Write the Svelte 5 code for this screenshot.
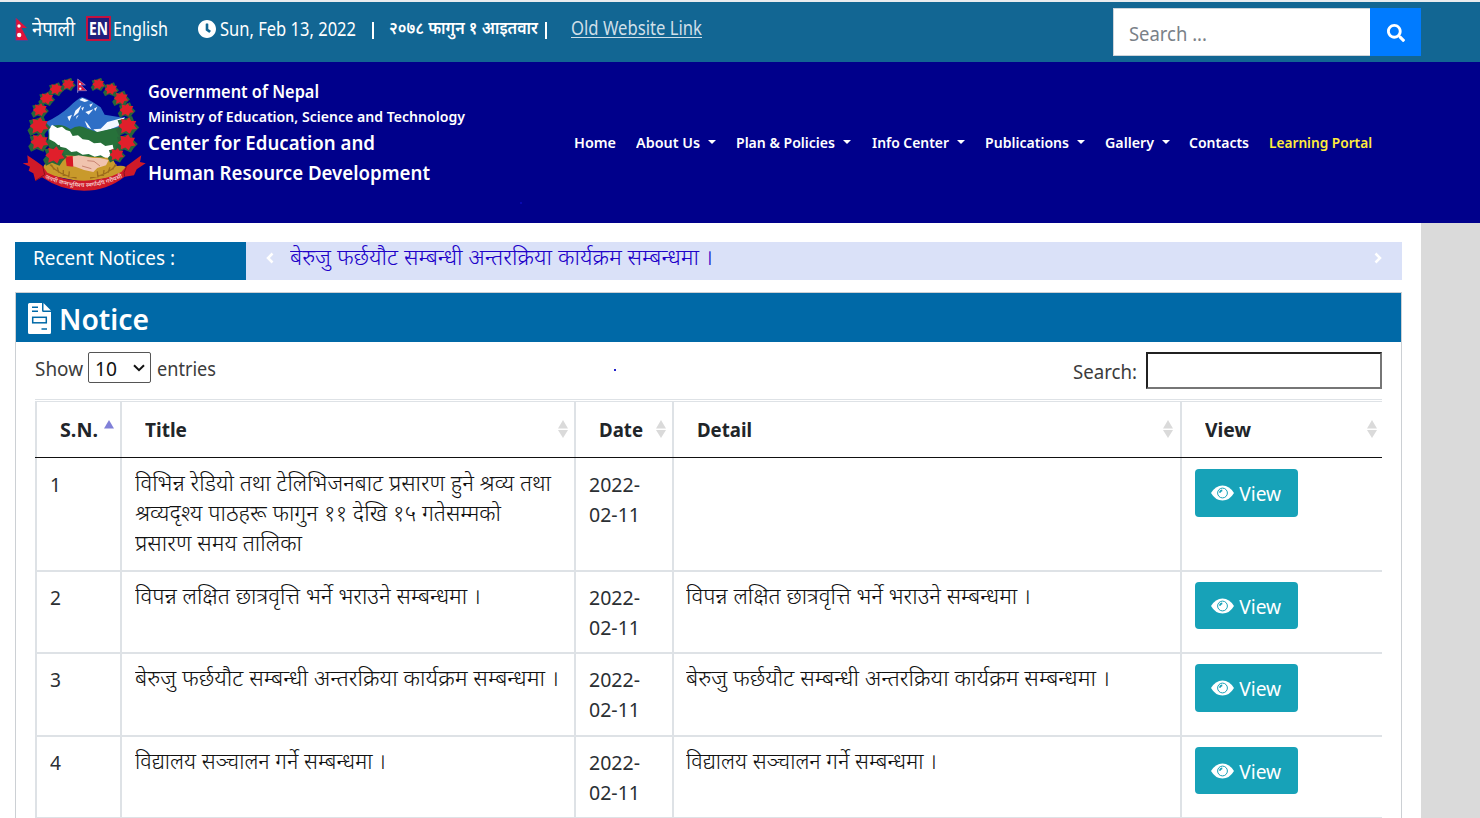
<script>
  // Stretches a line of text to a set measure, in pixels.
  function fit(node, width) {
    const natural = node.getBoundingClientRect().width;
    node.style.transform = `scaleX(${width / natural})`;
    node.style.width = `${width}px`;
  }

  const menu = [
    { label: 'Home', w: 42, after: 20 },
    { label: 'About Us', w: 64, caret: true, after: 20 },
    { label: 'Plan & Policies', w: 99, caret: true, after: 20 },
    { label: 'Info Center', w: 77, caret: true, after: 20 },
    { label: 'Publications', w: 84, caret: true, after: 20 },
    { label: 'Gallery', w: 49, caret: true, after: 19 },
    { label: 'Contacts', w: 60, after: 20 },
    { label: 'Learning Portal', w: 103, accent: true, after: 0 }
  ];

  const columns = [
    { label: 'S.N.', w: 38, sort: 'asc' },
    { label: 'Title', w: 42, sort: 'both' },
    { label: 'Date', w: 44, sort: 'both' },
    { label: 'Detail', w: 55, sort: 'both' },
    { label: 'View', w: 46, sort: 'both' }
  ];

  const rows = [
    {
      title: [
        ['विभिन्न रेडियो तथा टेलिभिजनबाट प्रसारण हुने श्रव्य तथा', 416],
        ['श्रव्यदृश्य पाठहरू फागुन ११ देखि १५ गतेसम्मको', 366],
        ['प्रसारण समय तालिका', 167]
      ],
      detail: []
    },
    {
      title: [['विपन्न लक्षित छात्रवृत्ति भर्ने भराउने सम्बन्धमा ।', 346]],
      detail: [['विपन्न लक्षित छात्रवृत्ति भर्ने भराउने सम्बन्धमा ।', 345]]
    },
    {
      title: [['बेरुजु फर्छयौट सम्बन्धी अन्तरक्रिया कार्यक्रम सम्बन्धमा ।', 424]],
      detail: [['बेरुजु फर्छयौट सम्बन्धी अन्तरक्रिया कार्यक्रम सम्बन्धमा ।', 424]]
    },
    {
      title: [['विद्यालय सञ्चालन गर्ने सम्बन्धमा ।', 251]],
      detail: [['विद्यालय सञ्चालन गर्ने सम्बन्धमा ।', 251]]
    }
  ];

  const flowers = [
    [175, 55, 17], [138, 70, 18], [110, 98, 19], [90, 132, 20], [87, 180, 26], [88, 228, 25],
    [265, 55, 17], [303, 70, 18], [333, 97, 20], [350, 132, 20], [353, 180, 26], [350, 230, 25],
    [320, 266, 20], [135, 268, 27]
  ];
</script>

<div class="page">
  <div class="topbar">
    <svg class="flag" width="14" height="25" viewBox="0 0 14 25">
      <path d="M.8.8 12 11H6.500L13 23.500H.8Z" fill="#dc143c" />
      <path d="M.8.8V23.500H13" fill="none" stroke="#3a4f9f" stroke-width=".8" />
      <circle cx="4" cy="9" r="1.700" fill="#fff" /><circle cx="4.200" cy="18" r="2.200" fill="#fff" />
    </svg>
    <span class="t nepali" use:fit={43}>नेपाली</span>
    <span class="en"><span class="t" use:fit={19}>EN</span></span>
    <span class="t english" use:fit={55}>English</span>
    <svg class="clock" width="18" height="18" viewBox="8 8 496 496">
      <path fill="#fff" d="M256 8C119 8 8 119 8 256s111 248 248 248 248-111 248-248S393 8 256 8zm57.100 350.100L224.900 294c-3.100-2.300-4.900-5.900-4.900-9.700V116c0-6.600 5.400-12 12-12h48c6.600 0 12 5.400 12 12v137.700l63.500 46.200c5.400 3.900 6.500 11.400 2.600 16.800l-28.200 38.800c-3.900 5.300-11.400 6.500-16.800 2.600z" />
    </svg>
    <span class="t date" use:fit={136}>Sun, Feb 13, 2022</span>
    <span class="bar first"></span>
    <span class="t bs" use:fit={149}>२०७८ फागुन १ आइतवार</span>
    <span class="bar second"></span>
    <a class="old" href="#old"><span class="t" use:fit={131}>Old Website Link</span></a>
    <div class="search">
      <div class="field"><span class="t" use:fit={78}>Search ...</span></div>
      <button class="go" aria-label="Search">
        <svg width="18" height="18" viewBox="0 0 512 512"><path fill="#fff" d="M505 442.700L405.300 343c-4.500-4.500-10.600-7-17-7H372c27.600-35.300 44-79.700 44-128C416 93.100 322.900 0 208 0S0 93.100 0 208s93.100 208 208 208c48.300 0 92.700-16.400 128-44v16.300c0 6.400 2.500 12.500 7 17l99.700 99.700c9.400 9.400 24.600 9.400 33.900 0l28.300-28.300c9.400-9.400 9.400-24.600.1-34zM208 336c-70.700 0-128-57.200-128-128 0-70.700 57.200-128 128-128 70.700 0 128 57.200 128 128 0 70.700-57.200 128-128 128z" /></svg>
      </button>
    </div>
  </div>

  <header>
    <svg class="emblem" width="138" height="130" viewBox="9 36 414 390">
      <path d="M108 168Q150 148 178 122T215 94Q228 96 248 108L272 124 284 146 345 156 320 206 116 206Z" fill="#2e6fc6" />
      <path d="M208 102 217 96 236 104 224 108ZM238 116 249 112 242 124ZM252 128 262 122 256 136ZM196 134 214 118 205 140 190 152ZM214 126 222 122 218 134ZM226 138 250 130 236 146ZM172 152 186 146 178 166ZM200 150 206 148 198 160ZM224 164 232 172 244 190 232 184ZM250 190 272 188 292 168 345 154 326 180 300 190 262 200Z" fill="#f4f8ff" />
      <path d="M118 184Q150 168 182 190 206 172 232 188L262 198 326 184 336 240 306 280 130 274 112 232Z" fill="#27713a" />
      <path d="M118 188 126 176 142 186 156 182 168 192 180 196 188 210 204 208 218 220 236 222 252 232 272 230 286 240 308 236 312 256 306 276 290 278 272 268 254 272 236 264 218 266 200 256 184 258 168 246 150 242 134 228 118 220Z" fill="#fff" />
      <path d="M112 272 160 268 306 276 320 300Q350 296 352 310L330 330 220 348 110 326 100 304Q104 288 120 290Z" fill="#c99a2b" />
      <path d="M120 296Q150 330 200 336M320 296Q290 330 240 336M132 310 124 296M146 320 142 304M160 330 160 312M176 334 178 316M308 310 316 296M294 320 300 304M280 330 282 312M264 334 262 316" stroke="#9c6c1c" stroke-width="4" fill="none" />
      <path d="M184 272 206 268 230 272 250 276 270 276 296 282 288 298 262 306 250 318 222 312 196 302 184 300Z" fill="#f0c3ae" />
      <path d="M232 284 252 286 270 300M216 300 244 308" stroke="#c98472" stroke-width="3" fill="none" />
      <path d="M166 272 188 270 190 302 170 300Z" fill="#d81824" />
      {#each flowers as [x, y, r]}
        <g transform="translate({x} {y}) scale({r / 6})">
          <path d="M-8 3-5.500 0-7-4-2-5 3-7 5-2 8 1 5 4 3 7-2 5-6 7Z" fill="#28663a" />
          <path d="M-6.500 0-4-2-4.500-5-1-4 1-6 2.500-3.500 6-3.500 4.500-.5 6.500 2 3 2.500 1.500 5.500-1 3.500-4.500 5-4 2Z" fill="#e01f2b" />
        </g>
      {/each}
      <path d="M203 80V39L226 57H212L230 74H203Z" fill="#dc143c" stroke="#8f90cf" stroke-width="2" />
      <circle cx="210" cy="54" r="3" fill="#fff" /><circle cx="211" cy="68" r="3.500" fill="#fff" />
      <path d="M38 292 54 290 52 268Q76 284 98 300L112 320Q160 344 222 344T334 318L350 300 394 268 390 288 407 292 380 310 372 328 344 332Q290 374 222 374T96 334L76 344 70 322 56 314 60 302Z" fill="#cf1a28" />
      <path d="M98 300 104 326 76 344M350 300 342 320 344 332" stroke="#86121f" stroke-width="3" fill="none" />
      <path id="motto" d="M104 336Q222 392 342 332" fill="none" />
      <text class="motto" textLength="242" lengthAdjust="spacingAndGlyphs"><textPath href="#motto">जननी जन्मभूमिश्च स्वर्गादपि गरीयसी</textPath></text>
    </svg>
    <div class="brand">
      <div class="l1"><span class="t" use:fit={171}>Government of Nepal</span></div>
      <div class="l2"><span class="t" use:fit={317}>Ministry of Education, Science and Technology</span></div>
      <div class="l3"><span class="t" use:fit={227}>Center for Education and</span></div>
      <div class="l4"><span class="t" use:fit={282}>Human Resource Development</span></div>
    </div>
    <nav>
      {#each menu as item}
        <a href="#menu" class:accent={item.accent} style="margin-right: {item.after}px">
          <span class="t" use:fit={item.w}>{item.label}</span>
          {#if item.caret}<i class="caret"></i>{/if}
        </a>
      {/each}
    </nav>
    <i class="speck dim"></i>
  </header>

  <main>
    <div class="ticker">
      <div class="tag"><span class="t" use:fit={142}>Recent Notices :</span></div>
      <div class="news">
        <svg width="8" height="12" viewBox="0 0 8 12"><path d="M6.500 1.500 2 6l4.500 4.500" stroke="#fff" stroke-width="2.500" fill="none" /></svg>
        <span class="t headline" use:fit={423}>बेरुजु फर्छयौट सम्बन्धी अन्तरक्रिया कार्यक्रम सम्बन्धमा ।</span>
        <svg class="next" width="8" height="12" viewBox="0 0 8 12"><path d="M1.500 1.500 6 6l-4.500 4.500" stroke="#fff" stroke-width="2.500" fill="none" /></svg>
      </div>
    </div>

    <section class="card">
      <h2>
        <svg width="23" height="31" viewBox="0 0 23 31">
          <path d="M1.500 0H14V7.500Q14 9 15.500 9H23V29.500Q23 31 21.500 31H1.500Q0 31 0 29.500V1.500Q0 0 1.500 0ZM15.500 0 23 7.500H15.500Z" fill="#fff" />
          <path d="M4 4.300h6M4 8.200h6M13.500 26h5.500" stroke="#0069a7" stroke-width="1.500" />
          <rect x="4.700" y="14.300" width="13.600" height="5.500" fill="none" stroke="#0069a7" stroke-width="1.500" />
        </svg>
        <span class="t" use:fit={90}>Notice</span>
      </h2>
      <div class="tools">
        <span class="t show" use:fit={48}>Show</span>
        <div class="select">
          <span class="t" use:fit={22}>10</span>
          <svg width="12" height="8" viewBox="0 0 12 8"><path d="M1 1.200 6 6.200 11 1.200" stroke="#111" stroke-width="2" fill="none" /></svg>
        </div>
        <span class="t entries" use:fit={59}>entries</span>
        <i class="speck"></i>
        <span class="t find" use:fit={64}>Search:</span>
        <input aria-label="Search notices" />
      </div>
      <div class="table">
        <div class="row head">
          {#each columns as col}
            <div class="cell">
              <span class="t" use:fit={col.w}>{col.label}</span>
              <svg class="sort" width="10" height="18" viewBox="0 0 10 18">
                {#if col.sort === 'asc'}
                  <path d="M0 8.500 5 0 10 8.500Z" fill="#8080d8" />
                {:else}
                  <path d="M0 8.500 5 0 10 8.500ZM0 10 5 18 10 10Z" fill="#dadada" />
                {/if}
              </svg>
            </div>
          {/each}
        </div>
        {#each rows as row, i}
          <div class="row body r{i + 1}">
            <div class="cell"><span class="t" use:fit={11}>{i + 1}</span></div>
            <div class="cell deva">
              {#each row.title as [line, w]}<div><span class="t" use:fit={w}>{line}</span></div>{/each}
            </div>
            <div class="cell">
              <div><span class="t" use:fit={51}>2022-</span></div>
              <div><span class="t" use:fit={51}>02-11</span></div>
            </div>
            <div class="cell deva">
              {#each row.detail as [line, w]}<div><span class="t" use:fit={w}>{line}</span></div>{/each}
            </div>
            <div class="cell act">
              <button class="view">
                <svg width="23" height="16" viewBox="0 0 23 16">
                  <path d="M0 8Q4.500.4 11.500.4T23 8Q18.500 15.600 11.500 15.600T0 8Z" fill="#fff" />
                  <circle cx="11.500" cy="8" r="4.900" fill="none" stroke="#17a2b8" stroke-width="1" />
                  <path d="M8.900 7.800A2.600 2.600 0 0 1 11.300 5.400" fill="none" stroke="#17a2b8" stroke-width="1.600" />
                </svg>
                <span class="t" use:fit={42}>View</span>
              </button>
            </div>
          </div>
        {/each}
      </div>
    </section>
  </main>
</div>

<style>
  :global(body) { margin: 0; overflow: hidden; }
  * { box-sizing: border-box; }
  .page {
    width: 1480px; height: 818px; overflow: hidden; background: #dadada;
    font-family: "Noto Sans", "Open Sans", sans-serif; font-size: 19px; line-height: 30px; color: #212529;
    display: flex; flex-direction: column;
  }
  .t { display: inline-block; white-space: nowrap; transform-origin: left center; flex: none; }
  svg { display: block; flex: none; }
  a { color: inherit; text-decoration: none; }
  button { border: 0; padding: 0; font: inherit; color: #fff; }

  .topbar {
    height: 62px; flex: none; border-top: 2px solid #e9ecef; background: #126693; color: #fff;
    display: flex; align-items: flex-start; padding: 12px 59px 0 15px;
  }
  .flag { margin: 3px 3px 0 0; }
  .nepali { margin-right: 11px; font-size: 20.500px; margin-top: -1px; }
  .en {
    width: 25px; height: 25px; margin: 2px 2px 0 0; background: #20207c; border: 2px solid #c3123f;
    font: 700 17px/21px "Open Sans", sans-serif; display: flex; justify-content: center;
  }
  .english { margin-right: 30px; }
  .clock { margin: 6px 4px 0 0; }
  .bar { width: 2px; height: 17px; background: #fff; margin-top: 8px; }
  .bar.first { margin-left: 16px; margin-right: 15px; }
  .bar.second { margin-left: 7px; margin-right: 24px; }
  .bs { font-weight: 600; font-size: 17px; margin-top: -1px; }
  .old { color: #cfdfe8; margin-top: -1px; }
  .old .t { text-decoration: underline; text-decoration-thickness: 1px; text-underline-offset: 2px; }
  .search { margin-left: auto; margin-top: -6px; display: flex; height: 48px; }
  .field { width: 257px; background: #fff; color: #7a8188; padding: 10px 15px; border: 1px solid #ced4da; border-right: 0; }
  .go { width: 51px; background: #007bff; display: flex; align-items: center; justify-content: center; padding-top: 2px; }

  header {
    height: 161px; flex: none; background: #00008b; color: #fff; display: flex; align-items: flex-start;
    position: relative; font-weight: 600;
  }
  .emblem { margin: 16px 0 0 13px; }
  .motto { font: 500 17px "Noto Sans", sans-serif; fill: #f6dada; }
  .brand { width: 425px; margin: 16px 0 0 -4px; }
  .l1 { font-size: 17px; height: 25px; line-height: 28px; }
  .l2 { font-size: 14.300px; height: 25px; line-height: 28px; }
  .l3 { font-size: 19.300px; height: 30px; line-height: 29px; }
  .l4 { font-size: 19.300px; height: 30px; line-height: 29px; }
  .brand .t { position: relative; left: .5px; }
  nav { display: flex; font-size: 14.400px; margin: 66px 0 0 2px; }
  nav a { display: flex; align-items: center; height: 30px; }
  .accent { color: #ffeb3b; }
  .caret { border: 4.500px solid transparent; border-top-color: #fff; border-bottom: 0; margin-left: 8px; margin-top: -2px; }
  nav a:nth-child(3) .caret { margin-right: 1px; }
  .speck { width: 2px; height: 2px; background: #2222cc; }
  .speck.dim { position: absolute; left: 520px; top: 140px; background: #0808b0; }

  main { width: 1421px; flex: 1; background: #fff; padding: 19px 19px 0 15px; overflow: hidden; }
  .ticker { display: flex; height: 38px; color: #fff; }
  .tag { width: 231px; background: #0069a7; padding: 1px 0 0 18px; }
  .news { flex: 1; background: #dae1f8; display: flex; align-items: flex-start; padding-left: 20px; padding-right: 20px; }
  .news svg { margin-top: 10px; }
  .news .next { margin-left: auto; }
  .headline { color: #2000c8; margin-left: 16px; margin-top: -1px; font-size: 22px; font-weight: 300; }

  .card { margin-top: 12px; border: 1px solid #ccd0d4; height: 620px; }
  h2 { margin: 0; height: 49px; background: #0069a7; color: #fff; display: flex; align-items: center; padding-left: 12px; font-size: 28.500px; font-weight: 600; line-height: 40px; }
  h2 svg { margin-top: 2px; }
  h2 .t { margin-left: 8px; margin-top: 3px; }
  .tools { height: 57px; padding: 10px 19px 0; display: flex; align-items: flex-start; color: #3c3c3c; }
  .tools .t { margin-top: 2px; }
  .select { width: 63px; height: 31px; margin: 0 6px 0 5px; border: 1px solid #555; border-radius: 2px; display: flex; padding: 0 5px 0 6px; justify-content: space-between; color: #111; }
  .select svg { margin-top: 11px; }
  .tools .select .t { margin-top: 1px; }
  .tools .speck { margin: 17px 0 0 398px; }
  .tools .find { margin: 5px 9px 0 auto; }
  input { width: 236px; height: 37px; border: 2px solid; padding: 0; background: #fff; border-color: #212121 #767676 #767676 #212121; }

  .table { margin-left: 19px; width: 1347px; border-top: 1px solid #dee2e6; padding-top: 1px; }
  .row { display: grid; grid-template-columns: 85px 454px 98px 508px 202px; }
  .cell { border-left: 2px solid #dee2e6; }
  .head { height: 57px; border-top: 1px solid #dee2e6; border-bottom: 1px solid #111; font-weight: 700; }
  .head .cell { display: flex; padding: 13px 6px 0 23px; font-size: 18.700px; justify-content: space-between; }
  .head .cell:nth-child(4) { padding-right: 7px; }
  .head .cell:last-child { padding-right: 5px; }
  .sort { margin-top: 5px; }
  .body { border-bottom: 2px solid #dee2e6; color: #2b2f33; }
  .body .cell { padding: 11px 0 0 13px; }
  .body .deva { font-size: 22px; font-weight: 300; padding-top: 8px; color: #111; }
  .body .deva:nth-child(4) { padding-left: 12px; }
  .body .act { padding: 10px 0 0 13px; }
  .body.r1 { height: 114px; }
  .body.r1 .cell { padding-top: 12px; }
  .body.r1 .deva { padding-top: 9px; }
  .body.r1 .act { padding-top: 11px; }
  .r2 { height: 82px; }
  .r3 { height: 83px; }
  .r4 { height: 82px; }
  .view { width: 103px; height: 48px; border-radius: 4px; background: #17a2b8; display: flex; align-items: center; padding-left: 16px; }
  .r2 .view, .r4 .view { height: 47px; }
  .view .t { margin-left: 5px; margin-top: 2px; }
</style>
